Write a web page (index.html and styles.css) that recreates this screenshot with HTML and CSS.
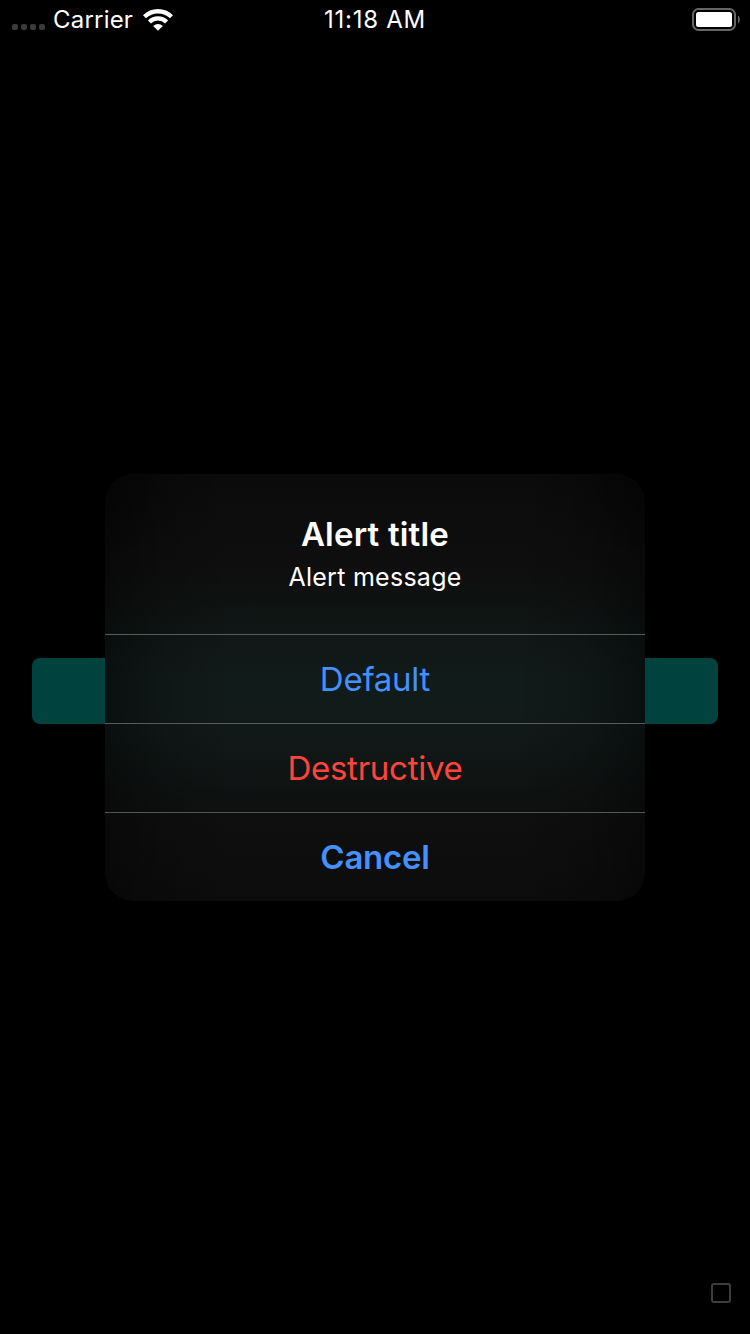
FILE: index.html
```html
<!DOCTYPE html>
<html lang="en">
<head>
<meta charset="utf-8">
<title>Alert</title>
<link rel="stylesheet" href="styles.css">
</head>
<body>
<div class="screen">
  <header class="status">
    <div class="status-left">
      <span class="signal"><i></i><i></i><i></i><i></i></span>
      <span class="carrier">Carrier</span>
      <svg class="wifi" width="30" height="22" viewBox="0 0 30 22" fill="none" stroke="#fff">
        <path d="M1.5 7.8a19.2 19.2 0 0 1 27 0" stroke-width="4.3"/>
        <path d="M6.4 12.9a12.2 12.2 0 0 1 17.2 0" stroke-width="4.2"/>
        <path d="M15 21.8L10.2 17a6.8 6.8 0 0 1 9.6 0z" fill="#fff" stroke="none"/>
      </svg>
    </div>
    <time class="clock">11:18 AM</time>
    <svg class="battery" width="48" height="23" viewBox="0 0 48 23">
      <rect x="1" y="1" width="42" height="21" rx="5.5" fill="none" stroke="#666" stroke-width="2"/>
      <rect x="4" y="4" width="36" height="15" rx="2.5" fill="#fff"/>
      <path d="M46 7.6c2.4 1.5 2.4 6.3 0 7.8z" fill="#666"/>
    </svg>
  </header>
  <main class="stage">
    <div class="button"></div>
    <section class="alert" role="alertdialog">
      <div class="alert-head">
        <h1 class="title">Alert title</h1>
        <p class="message">Alert message</p>
      </div>
      <div class="action default"><span>Default</span></div>
      <div class="action destructive"><span>Destructive</span></div>
      <div class="action cancel"><span>Cancel</span></div>
    </section>
  </main>
  <footer class="footer"><span class="square"></span></footer>
</div>
</body>
</html>
```
FILE: styles.css
```css
* { box-sizing: border-box; }
body { margin: 0; background: #000; color: #fff; font-family: Inter, "Liberation Sans", sans-serif; }
.screen { width: 750px; height: 1334px; display: flex; flex-direction: column; overflow: hidden; background: #000; }
.status { height: 40px; flex: none; display: grid; grid-template-columns: 1fr auto 1fr; align-items: center; padding: 0 10px 0 12px; font-size: 24px; line-height: 40px; }
.status-left { display: flex; align-items: center; }
.signal { display: flex; gap: 3px; margin: 14px 8px 0 0; }
.signal i { width: 6px; height: 6px; border-radius: 2px; background: #3a3a3a; }
.carrier { letter-spacing: 0.2px; font-weight: 400; }
.wifi { margin-left: 10px; }
.clock { letter-spacing: 0.75px; margin-right: 2px; }
.battery { justify-self: end; margin-bottom: 2px; }
.stage { flex: 1; display: grid; grid-template: 100% / 100%; }
.button { grid-area: 1 / 1; align-self: start; margin: 618px 32px 0; height: 66px; border-radius: 8px; background: #00423d; }
.alert {
  grid-area: 1 / 1; align-self: start; justify-self: center;
  width: 540px; height: 427px; margin-top: 434px; border-radius: 28px; overflow: hidden; text-align: center;
  background:
    radial-gradient(circle at 0 0, rgba(0,0,0,.4), transparent 90px),
    radial-gradient(circle at 100% 0, rgba(0,0,0,.4), transparent 90px),
    linear-gradient(90deg, rgba(0,0,0,.42), rgba(0,0,0,.15) 11%, transparent 24%, transparent 76%, rgba(0,0,0,.15) 89%, rgba(0,0,0,.42)),
    linear-gradient(#0b0b0b 0, #0f0f0f 25%, #101615 36%, #111b1a 47%, #111b1a 56%, #101615 67%, #0f0f0f 80%, #0c0c0c 100%);
}
.alert-head { height: 160px; padding-top: 39px; }
.title { margin: 0; font-size: 33px; font-weight: 600; line-height: 42px; letter-spacing: 0.2px; }
.message { margin: 6px 0 0; font-size: 25px; font-weight: 400; line-height: 32px; letter-spacing: 0.27px; }
.action { height: 89px; border-top: 1px solid #535d5b; font-size: 33px; line-height: 88px; letter-spacing: -0.25px; color: #4490ff; }
.destructive { color: #ff453a; }
.cancel { font-weight: 600; border-color: #555; }
.footer { height: 52px; flex: none; display: flex; justify-content: flex-end; padding: 1px 19px 0 0; }
.square { width: 20.5px; height: 20px; border: 2px solid #3d3d3d; border-radius: 3px; }
```
